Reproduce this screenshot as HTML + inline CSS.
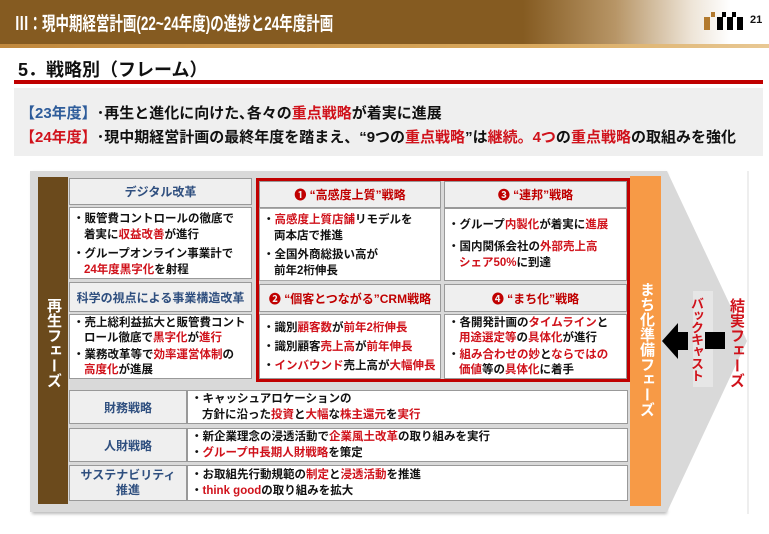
<!DOCTYPE html>
<html><head><meta charset="utf-8"><style>
*{margin:0;padding:0;box-sizing:border-box}
body{width:769px;height:534px;background:#fff;position:relative;overflow:hidden;font-family:"Liberation Sans","Noto Sans CJK JP",sans-serif;font-weight:bold;color:#111}
.a{position:absolute}
.r{color:#d0121b}
.cell{position:absolute;background:#fff;border:1px solid #999}
.hd{position:absolute;background:#efefef;border:1px solid #999;text-align:center;font-size:12px;color:#2f4f7f;display:flex;align-items:center;justify-content:center;white-space:nowrap}
.hr{color:#c00000}
.bd{font-size:11.5px;line-height:16px;padding:3px 0 0 3px;white-space:nowrap;overflow:hidden}
.bd p{margin-bottom:3px;padding-left:11px;text-indent:-11px}
.v{writing-mode:vertical-rl;text-orientation:upright;position:absolute}
</style></head><body>
<div class="a" style="left:0;top:0;width:769px;height:44px;background:linear-gradient(90deg,#855b21 0%,#855b21 68%,#b79566 80%,#eee5d8 90%,#fff 95%)"></div>
<div class="a" style="left:0;top:44px;width:769px;height:4px;background:linear-gradient(90deg,#c0883d,#d9a95e 70%,#e8c894)"></div>
<div class="a" style="left:15px;top:9px;font-size:19px;color:#fff;white-space:nowrap;transform:scaleX(0.71);transform-origin:0 0">Ⅲ：現中期経営計画(22~24年度)の進捗と24年度計画</div>
<svg class="a" style="left:703px;top:11px" width="42" height="20"><rect x="1" y="6" width="6" height="13" fill="#b37a2e"/><rect x="8" y="1" width="4" height="5" fill="#b37a2e"/><rect x="14" y="6" width="6" height="13" fill="#000"/><rect x="19" y="1" width="4" height="5" fill="#000"/><rect x="24" y="6" width="6" height="13" fill="#000"/><rect x="29" y="1" width="4" height="5" fill="#000"/><rect x="34" y="6" width="6" height="13" fill="#000"/></svg>
<div class="a" style="left:750px;top:14px;font-size:11px;color:#111">21</div>
<div class="a" style="left:18px;top:56px;font-size:18px;white-space:nowrap">5．戦略別（フレーム）</div>
<div class="a" style="left:14px;top:80px;width:749px;height:4px;background:#c00000"></div>
<div class="a" style="left:14px;top:88px;width:749px;height:68px;background:#efefef"></div>
<div class="a" style="left:20px;top:102px;font-size:15px;white-space:nowrap"><span style="color:#2e5c9a">【23年度】</span>･再生と進化に向けた､各々の<span class="r">重点戦略</span>が着実に進展</div>
<div class="a" style="left:20px;top:126px;font-size:15px;white-space:nowrap"><span class="r">【24年度】</span>･現中期経営計画の最終年度を踏まえ、“9つの<span class="r">重点戦略</span>”は<span class="r">継続。4つ</span>の<span class="r">重点戦略</span>の取組みを強化</div>

<div class="a" style="left:30px;top:171px;width:635px;height:341px;background:#d9d9d9;box-shadow:2px 2px 3px #bbb"></div>
<svg class="a" style="left:655px;top:171px" width="100" height="343"><polygon points="0,0 12,0 92,170 12,341 0,341" fill="#d9d9d9"/><line x1="93" y1="0" x2="93" y2="343" stroke="#ddd"/><rect x="38" y="120" width="20" height="96" fill="#e6e6e6"/><polygon points="7,170 23,152 23,161 33,161 33,179 23,179 23,188" fill="#000"/><rect x="50" y="161" width="20" height="17" fill="#000"/></svg>
<div class="v r" style="left:688px;top:297px;font-size:13px;line-height:16px;letter-spacing:-1px">バックキャスト</div>
<div class="v r" style="left:727px;top:298px;font-size:15px;line-height:18px">結実フェーズ</div>

<div class="a" style="left:38px;top:177px;width:30px;height:327px;background:#6b4a1c"></div>
<div class="v" style="left:44px;top:298px;font-size:15px;line-height:18px;color:#fff">再生フェーズ</div>
<div class="a" style="left:630px;top:176px;width:31px;height:330px;background:#f79a46"></div>
<div class="v" style="left:637px;top:282px;font-size:15px;line-height:18px;color:#fff">まち化準備フェーズ</div>

<div class="hd" style="left:69px;top:178px;width:183px;height:27px">デジタル改革</div>
<div class="cell bd" style="left:69px;top:207px;width:183px;height:72px"><p>・販管費コントロールの徹底で<br>着実に<span class="r">収益改善</span>が進行</p><p>・グループオンライン事業計で<br><span class="r">24年度黒字化</span>を射程</p></div>
<div class="hd" style="left:69px;top:282px;width:183px;height:30px">科学の視点による事業構造改革</div>
<div class="cell bd" style="left:69px;top:314px;width:183px;height:65px;padding-top:1px;line-height:15px"><p style="margin-bottom:2px">・売上総利益拡大と販管費コント<br>ロール徹底で<span class="r">黒字化</span>が<span class="r">進行</span></p><p style="margin:0">・業務改革等で<span class="r">効率運営体制</span>の<br><span class="r">高度化</span>が進展</p></div>

<div class="a" style="left:256px;top:178px;width:374px;height:204px;border:3px solid #c00000;background:#d9d9d9"></div>
<div class="hd hr" style="left:259px;top:181px;width:182px;height:27px">❶ “高感度上質”戦略</div>
<div class="cell bd" style="left:259px;top:208px;width:182px;height:73px;border-color:#aaa"><p>・<span class="r">高感度上質店舗</span>リモデルを<br>両本店で推進</p><p>・全国外商総扱い高が<br>前年2桁伸長</p></div>
<div class="hd hr" style="left:259px;top:284px;width:182px;height:28px">❷ “個客とつながる”CRM戦略</div>
<div class="cell bd" style="left:259px;top:314px;width:182px;height:65px;padding-top:5px"><p style="margin-bottom:3px">・識別<span class="r">顧客数</span>が<span class="r">前年2桁伸長</span></p><p style="margin-bottom:3px">・識別顧客<span class="r">売上高</span>が<span class="r">前年伸長</span></p><p>・<span class="r">インバウンド</span>売上高が<span class="r">大幅伸長</span></p></div>
<div class="hd hr" style="left:444px;top:181px;width:183px;height:27px">❸ “連邦”戦略</div>
<div class="cell bd" style="left:444px;top:208px;width:183px;height:73px;padding-top:8px"><p style="margin-bottom:6px">・グループ<span class="r">内製化</span>が着実に<span class="r">進展</span></p><p>・国内関係会社の<span class="r">外部売上高<br>シェア50%</span>に到達</p></div>
<div class="hd hr" style="left:444px;top:284px;width:183px;height:28px">❹ “まち化”戦略</div>
<div class="cell bd" style="left:444px;top:314px;width:183px;height:65px;padding-top:1px;line-height:15px"><p style="margin-bottom:2px">・各開発計画の<span class="r">タイムライン</span>と<br><span class="r">用途選定等</span>の<span class="r">具体化</span>が進行</p><p style="margin:0">・<span class="r">組み合わせの妙</span>と<span class="r">ならではの<br>価値</span>等の<span class="r">具体化</span>に着手</p></div>

<div class="hd" style="left:69px;top:390px;width:118px;height:34px">財務戦略</div>
<div class="cell bd" style="left:187px;top:390px;width:441px;height:34px;padding-top:0"><p style="margin:0">・キャッシュアロケーションの<br>方針に沿った<span class="r">投資</span>と<span class="r">大幅</span>な<span class="r">株主還元</span>を<span class="r">実行</span></p></div>
<div class="hd" style="left:69px;top:428px;width:118px;height:34px">人財戦略</div>
<div class="cell bd" style="left:187px;top:428px;width:441px;height:34px;padding-top:0"><p style="margin:0">・新企業理念の浸透活動で<span class="r">企業風土改革</span>の取り組みを実行</p><p style="margin:0">・<span class="r">グループ中長期人財戦略</span>を策定</p></div>
<div class="hd" style="left:69px;top:465px;width:118px;height:36px;line-height:15px">サステナビリティ<br>推進</div>
<div class="cell bd" style="left:187px;top:465px;width:441px;height:36px;padding-top:1px"><p style="margin:0">・お取組先行動規範の<span class="r">制定</span>と<span class="r">浸透活動</span>を推進</p><p style="margin:0">・<span class="r">think good</span>の取り組みを拡大</p></div>
</body></html>
